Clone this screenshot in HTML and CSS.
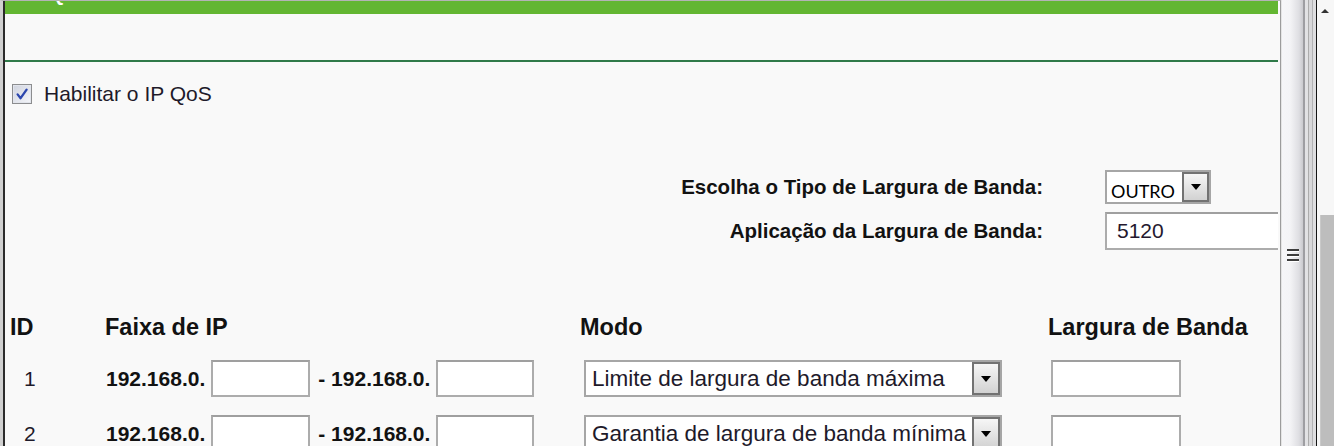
FILE: index.html
```html
<!DOCTYPE html>
<html lang="pt">
<head>
<meta charset="utf-8">
<title>IP QoS</title>
<link rel="stylesheet" href="styles.css">
</head>
<body>
<div class="window">
  <div class="page">
    <div class="content">
      <div class="titlebar"><span class="title">IP QoS</span></div>
      <div class="subhead"></div>

      <div class="enable">
        <span class="checkbox">
          <svg width="14" height="14" viewBox="0 0 14 14"><path d="M2.6 7.4 L5.6 11.2 L11.6 2.6" fill="none" stroke="#2b46ae" stroke-width="2.3" stroke-linecap="round" stroke-linejoin="round"/></svg>
        </span>
        <span class="enable-label">Habilitar o IP QoS</span>
      </div>

      <div class="settings">
        <div class="setting-label">Escolha o Tipo de Largura de Banda:</div>
        <div class="select select-type">
          <span class="select-value value-type">OUTRO</span>
          <span class="select-btn"><svg width="10" height="6" viewBox="0 0 10 6"><path d="M0 0H10L5 6Z" fill="#000"/></svg></span>
        </div>
        <div class="setting-label">Aplicação da Largura de Banda:</div>
        <div class="field field-total">5120</div>
      </div>

      <div class="rules">
        <div class="th">ID</div>
        <div class="th">Faixa de IP</div>
        <div class="th">Modo</div>
        <div class="th">Largura de Banda</div>

        <div class="cell-id">1</div>
        <div class="cell-ip">
          <span>192.168.0.</span>
          <span class="field field-ip first"></span>
          <span>- 192.168.0.</span>
          <span class="field field-ip second"></span>
        </div>
        <div class="cell-mode">
          <div class="select select-mode">
            <span class="select-value">Limite de largura de banda máxima</span>
            <span class="select-btn"><svg width="10" height="6" viewBox="0 0 10 6"><path d="M0 0H10L5 6Z" fill="#000"/></svg></span>
          </div>
        </div>
        <div class="cell-bw"><span class="field field-bw"></span></div>

        <div class="cell-id">2</div>
        <div class="cell-ip">
          <span>192.168.0.</span>
          <span class="field field-ip first"></span>
          <span>- 192.168.0.</span>
          <span class="field field-ip second"></span>
        </div>
        <div class="cell-mode">
          <div class="select select-mode">
            <span class="select-value">Garantia de largura de banda mínima</span>
            <span class="select-btn"><svg width="10" height="6" viewBox="0 0 10 6"><path d="M0 0H10L5 6Z" fill="#000"/></svg></span>
          </div>
        </div>
        <div class="cell-bw"><span class="field field-bw"></span></div>
      </div>
    </div>
  </div>

  <div class="scroll-inner"><span class="grip"></span></div>
  <div class="scroll-outer">
    <span class="arrow-up"></span>
    <span class="thumb"></span>
  </div>
</div>
</body>
</html>
```

FILE: styles.css
```css
* { box-sizing: border-box; }

html, body {
  margin: 0;
  height: 100%;
}

body {
  background: #f9f9f9;
  font-family: "Liberation Sans", Arial, sans-serif;
  color: #1c1c1c;
  overflow: hidden;
}

.window {
  display: flex;
  height: 446px;
}

.page {
  width: 1281px;
  flex: none;
  display: flex;
  border-top: 1px solid #b4b4b4;
  border-left: 3px solid #d0d0d0;
  border-right: 1px solid #9c9c9c;
  padding-right: 2px;
}

.content {
  flex: 1;
  min-width: 0;
  border-left: 2px solid #2b2b2b;
  overflow: hidden;
  display: flex;
  flex-direction: column;
}

.titlebar {
  height: 13px;
  flex: none;
  background: #63b632;
  overflow: hidden;
  padding-left: 24px;
}

.title {
  display: block;
  color: #ffffff;
  font-weight: bold;
  font-size: 18px;
  line-height: 20px;
  margin-top: -16px;
}

.subhead {
  height: 48px;
  flex: none;
  border-bottom: 2px solid #2f7a49;
}

/* enable checkbox */
.enable {
  display: flex;
  align-items: center;
  gap: 12px;
  height: 20px;
  margin: 22px 0 0 7px;
  font-size: 21px;
  color: #1e1a2a;
}

.checkbox {
  width: 20px;
  height: 20px;
  flex: none;
  border: 1px solid #8c8d8f;
  box-shadow: inset 0 0 0 1px #e2e5ec;
  background: linear-gradient(135deg, #cfd3de, #f5f6fa);
  display: flex;
  align-items: center;
  justify-content: center;
}

/* settings */
.settings {
  display: grid;
  grid-template-columns: 1038px auto;
  column-gap: 62px;
  row-gap: 8px;
  align-items: center;
  margin-top: 66px;
}

.setting-label {
  text-align: right;
  font-weight: bold;
  font-size: 20.5px;
  color: #121212;
}

.field {
  display: block;
  background: #ffffff;
  border: 2px solid #acacac;
  border-top-color: #9f9f9f;
}

.field-total {
  width: 220px;
  height: 38px;
  font-size: 21px;
  line-height: 34px;
  padding-left: 10px;
  color: #24182e;
}

.select {
  display: flex;
  background: #ffffff;
  border: 2px solid #a6a6a6;
}

.select-value {
  flex: 1;
  display: flex;
  align-items: center;
  white-space: nowrap;
  overflow: hidden;
}

.select-btn {
  width: 28px;
  flex: none;
  border: 2px solid #727272;
  background: linear-gradient(#f6f6f6, #d2d2d2);
  display: flex;
  align-items: center;
  justify-content: center;
}

.select-type {
  width: 106px;
  height: 34px;
}

.value-type {
  font-family: Lato, "Open Sans", sans-serif;
  font-size: 18px;
  color: #000;
  padding: 7px 0 0 4px;
}

.select-type .select-btn {
  width: 27px;
}

/* rules table */
.rules {
  display: grid;
  grid-template-columns: 95px 475px 468px 1fr;
  row-gap: 18px;
  align-items: center;
  margin-top: 63px;
}

.th {
  font-weight: bold;
  font-size: 23.5px;
  line-height: 29px;
  padding-left: 5px;
  color: #121212;
  white-space: nowrap;
}

.cell-id {
  padding-left: 19px;
  font-size: 21px;
  color: #1e1a2a;
}

.cell-ip {
  display: flex;
  align-items: center;
  padding-left: 6px;
  font-weight: bold;
  font-size: 21px;
  color: #121212;
  white-space: nowrap;
}

.field-ip {
  height: 37px;
}

.field-ip.first {
  width: 99px;
  margin: 0 8px 0 6px;
}

.field-ip.second {
  width: 98px;
  margin-left: 6px;
}

.cell-mode {
  padding-left: 9px;
}

.select-mode {
  width: 418px;
  height: 37px;
}

.select-mode .select-value {
  font-size: 22.5px;
  padding-left: 6px;
  color: #1e1a2a;
}

.cell-bw {
  padding-left: 8px;
}

.field-bw {
  width: 130px;
  height: 37px;
}

/* scrollbars */
.scroll-inner {
  width: 36px;
  flex: none;
  border-right: 1px solid #141414;
  background: linear-gradient(to right,
    #e4e4e4 0, #e4e4e4 1px,
    #f6f6f8 1px, #f4f4f6 9px,
    #dedee2 18px, #cacace 22px,
    #9e9ea2 22px, #9e9ea2 24px,
    #e2e2e4 24px, #e2e2e4 27px,
    #acacac 27px, #acacac 28px,
    #d8d8da 28px, #d8d8da 31px,
    #b2b2b4 31px, #b2b2b4 32px,
    #dedee0 32px);
  padding: 249px 0 0 6px;
}

.grip {
  display: block;
  width: 12px;
  height: 13px;
  background: repeating-linear-gradient(to bottom,
    #3c3c3c 0, #3c3c3c 2px,
    #ffffff 2px, #ffffff 3px,
    transparent 3px, transparent 5px);
}

.scroll-outer {
  width: 17px;
  flex: none;
  background: #f7f7f7;
  display: flex;
  flex-direction: column;
  align-items: flex-end;
}

.arrow-up {
  width: 0;
  height: 0;
  margin: 9px 5px 0 0;
  border-left: 4px solid transparent;
  border-right: 4px solid transparent;
  border-bottom: 4px solid #333333;
}

.thumb {
  width: 14px;
  height: 231px;
  margin-top: auto;
  background: #bdbdbd;
  border-left: 1px solid #c9c9c9;
}
```
